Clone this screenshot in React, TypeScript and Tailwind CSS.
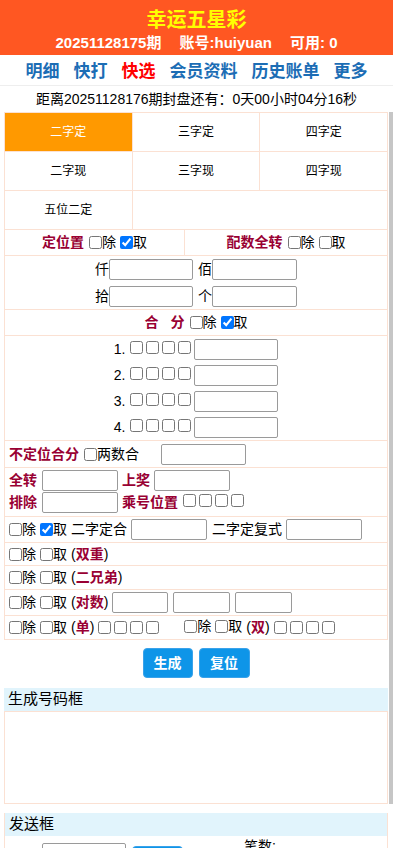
import React from 'react'

const FONT = { fontFamily: '"Liberation Sans", "Noto Sans CJK SC", sans-serif' }

function Cb({ on }: { on?: boolean }) {
  return <input type="checkbox" defaultChecked={on} className="m-0 h-[13px] w-[13px] shrink-0" />
}

function Field({ className }: { className: string }) {
  return (
    <input
      type="text"
      className={`h-[21px] shrink-0 rounded-[2px] border border-[#9a9a9a] bg-white px-1 text-[13px] outline-none ${className}`}
    />
  )
}

// □除 ☑取
function Pick({ take }: { take?: boolean }) {
  return (
    <span className="inline-flex items-center gap-[4px]">
      <span className="inline-flex items-center">
        <Cb />
        除
      </span>
      <span className="inline-flex items-center">
        <Cb on={take} />
        取
      </span>
    </span>
  )
}

function Boxes() {
  return (
    <span className="inline-flex items-center gap-[3px]">
      <Cb />
      <Cb />
      <Cb />
      <Cb />
    </span>
  )
}

function Tag({ children }: { children: React.ReactNode }) {
  return (
    <span>
      (<b className="text-[#990033]">{children}</b>)
    </span>
  )
}

const tabs = ['二字定', '三字定', '四字定', '二字现', '三字现', '四字现']

export default function App() {
  return (
    <div className="min-h-[848px] bg-white text-[14px] text-black" style={FONT}>
      {/* 顶部 */}
      <div className="flex h-[55px] flex-col items-center bg-[#ff5722] pt-[6px]">
        <div className="text-[20px] font-bold leading-[28px] text-[#ffff00]">幸运五星彩</div>
        <div className="flex gap-[18px] text-[15px] font-bold leading-[18px] text-white">
          <span>20251128175期</span>
          <span>账号:huiyuan</span>
          <span>可用: 0</span>
        </div>
      </div>

      {/* 导航 */}
      <div className="flex h-[31px] items-center justify-center gap-[14px] border-b border-[#eeeeee] pt-[4px] text-[17px] font-bold text-[#1c6db5]">
        <span>明细</span>
        <span>快打</span>
        <span className="text-[#ff0000]">快选</span>
        <span>会员资料</span>
        <span>历史账单</span>
        <span>更多</span>
      </div>

      <div className="flex h-[26px] items-center justify-center text-[14px]">
        距离20251128176期封盘还有：0天00小时04分16秒
      </div>

      <div className="flex pl-[4px]">
        <div className="w-[384px]">
          {/* 玩法 */}
          <div className="grid grid-cols-3 border-l border-t border-[#fbe1d3] text-[12px]">
            {tabs.map((t, i) => (
              <div
                key={t}
                className={`flex h-[39px] items-center justify-center border-b border-r border-[#fbe1d3] ${
                  i === 0 ? 'bg-[#ff9900] text-white' : ''
                }`}
              >
                {t}
              </div>
            ))}
            <div className="flex h-[39px] items-center justify-center border-b border-r border-[#fbe1d3]">五位二定</div>
            <div className="col-span-2 h-[39px] border-b border-r border-[#fbe1d3]" />
          </div>

          <div className="border-x border-[#fbe1d3]">
            <div className="grid h-[26px] grid-cols-[180px_1fr] border-b border-[#fbe1d3]">
              <div className="flex items-center justify-center gap-[5px] border-r border-[#fbe1d3]">
                <b className="text-[#990033]">定位置</b>
                <Pick take />
              </div>
              <div className="flex items-center justify-center gap-[5px]">
                <b className="text-[#990033]">配数全转</b>
                <Pick />
              </div>
            </div>

            <div className="flex flex-col items-center gap-[6px] border-b border-[#fbe1d3] pb-[2px] pt-[3px]">
              <div className="flex items-center">
                <span>仟</span>
                <Field className="w-[84px]" />
                <span className="ml-[5px]">佰</span>
                <Field className="w-[85px]" />
              </div>
              <div className="flex items-center">
                <span>拾</span>
                <Field className="w-[84px]" />
                <span className="ml-[5px]">个</span>
                <Field className="w-[85px]" />
              </div>
            </div>

            <div className="flex h-[26px] items-center justify-center gap-[5px] border-b border-[#fbe1d3]">
              <b className="text-[#990033]">
                合<span className="ml-[12px]">分</span>
              </b>
              <Pick take />
            </div>

            <div className="border-b border-[#fbe1d3]">
              {[1, 2, 3, 4].map((n) => (
                <div key={n} className="flex h-[26px] items-center justify-center">
                  <span>{n}.</span>
                  <span className="ml-[5px]">
                    <Boxes />
                  </span>
                  <Field className="ml-[3px] w-[84px]" />
                </div>
              ))}
            </div>

            <div className="flex h-[27px] items-center border-b border-[#fbe1d3] pl-[4px]">
              <b className="text-[#990033]">不定位合分</b>
              <span className="ml-[5px] inline-flex items-center">
                <Cb />
                两数合
              </span>
              <Field className="ml-[22px] w-[85px]" />
            </div>

            <div className="flex flex-col gap-[1px] border-b border-[#fbe1d3] pb-[3px] pl-[4px] pt-[2px]">
              <div className="flex h-[21px] items-center">
                <b className="w-[28px] text-[#990033]">全转</b>
                <Field className="ml-[5px] w-[76px]" />
                <b className="ml-[4px] text-[#990033]">上奖</b>
                <Field className="ml-[4px] w-[76px]" />
              </div>
              <div className="flex h-[21px] items-center">
                <b className="w-[28px] text-[#990033]">排除</b>
                <Field className="ml-[5px] w-[76px]" />
                <b className="ml-[4px] text-[#990033]">乘号位置</b>
                <span className="ml-[5px]">
                  <Boxes />
                </span>
              </div>
            </div>

            <div className="flex h-[26px] items-center gap-[4px] border-b border-[#fbe1d3] pl-[4px]">
              <Pick take />
              <span>二字定合</span>
              <Field className="w-[76px]" />
              <span className="ml-[1px]">二字定复式</span>
              <Field className="w-[76px]" />
            </div>

            <div className="flex h-[23px] items-center gap-[4px] border-b border-[#fbe1d3] pl-[4px]">
              <Pick />
              <Tag>双重</Tag>
            </div>

            <div className="flex h-[24px] items-center gap-[4px] border-b border-[#fbe1d3] pl-[4px]">
              <Pick />
              <Tag>二兄弟</Tag>
            </div>

            <div className="flex h-[26px] items-center gap-[4px] border-b border-[#fbe1d3] pl-[4px]">
              <Pick />
              <Tag>对数</Tag>
              <span className="flex gap-[5px]">
                <Field className="w-[56px]" />
                <Field className="w-[57px]" />
                <Field className="w-[57px]" />
              </span>
            </div>

            <div className="flex h-[24px] items-center gap-[4px] border-b border-[#fbe1d3] pl-[4px]">
              <Pick />
              <Tag>单</Tag>
              <Boxes />
              <span className="ml-[21px]">
                <Pick />
              </span>
              <Tag>双</Tag>
              <Boxes />
            </div>
          </div>

          <div className="flex justify-center gap-[6px] pb-[10px] pt-[8px]">
            <button className="h-[30px] w-[50px] rounded-[4px] border border-[#3aa2ea] bg-[#0e95e8] text-[14px] font-bold text-white">
              生成
            </button>
            <button className="h-[30px] w-[51px] rounded-[4px] border border-[#3aa2ea] bg-[#0e95e8] text-[14px] font-bold text-white">
              复位
            </button>
          </div>

          <div className="flex h-[23px] items-center bg-[#e1f4fc] pl-[4px] text-[15px]">生成号码框</div>
          <div className="h-[93px] border border-[#fbe1d3]" />
        </div>
        <div className="ml-px w-[4px] bg-[#c6c6c6]" />
      </div>

      <div className="mt-[9px] w-[388px] pl-[4px]">
        <div className="flex h-[23px] items-center border-x border-[#fbe1d3] bg-[#e1f4fc] pl-[4px] text-[15px]">发送框</div>
        <div className="flex h-[40px] items-start border-x border-[#fbe1d3]">
          <Field className="ml-[37px] mt-[7px] w-[84px]" />
          <button className="ml-[6px] mt-[10px] h-[30px] w-[51px] rounded-[4px] border border-[#3aa2ea] bg-[#0e95e8] text-[14px] font-bold text-white">
            发送
          </button>
          <span className="ml-[61px] mt-0">笔数:</span>
        </div>
      </div>
    </div>
  )
}
